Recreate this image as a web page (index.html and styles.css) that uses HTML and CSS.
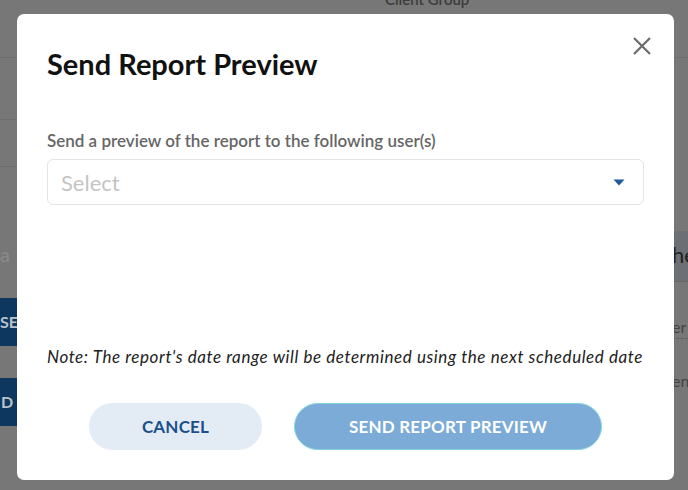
FILE: index.html
```html
<!DOCTYPE html>
<html lang="en">
<head>
  <meta charset="UTF-8" />
  <title>Send Report Preview</title>
  <link rel="stylesheet" href="styles.css">
</head>
<body>
  <!-- page behind the dialog, dimmed -->
  <div class="backdrop">
    <div class="side side-left">
      <div class="row-line gap-58"></div>
      <div class="row-line gap-61"></div>
      <div class="row-line gap-46"></div>
      <div class="stub-text">a</div>
      <div class="dark-btn">SE</div>
      <div class="dark-btn second">D</div>
    </div>
    <div class="middle">
      <div class="top-label">Client Group</div>
    </div>
    <div class="side side-right">
      <div class="row-line gap-58"></div>
      <div class="band">he</div>
      <div class="stub-right dashed">er</div>
      <div class="stub-right">ent</div>
    </div>
  </div>

  <div class="overlay">
    <div class="modal">
      <button class="close-btn" aria-label="Close">
        <svg width="20" height="20" viewBox="0 0 20 20">
          <path d="M2 2 L18 18 M18 2 L2 18" stroke="#6b6b6b" stroke-width="2.2" fill="none" />
        </svg>
      </button>
      <h2 class="modal-title">Send Report Preview</h2>
      <label class="field-label">Send a preview of the report to the following user(s)</label>
      <div class="select-box">
        <span class="placeholder">Select</span>
        <svg class="caret" width="12" height="7" viewBox="0 0 12 7">
          <path d="M0.5 0.5 L11.5 0.5 L6 6.5 Z" fill="#1d5b9b" />
        </svg>
      </div>
      <p class="note">Note: The report's date range will be determined using the next scheduled date</p>
      <div class="actions">
        <button class="btn btn-cancel">CANCEL</button>
        <button class="btn btn-send">SEND REPORT PREVIEW</button>
      </div>
    </div>
  </div>
</body>
</html>
```

FILE: styles.css
```css
* {
  box-sizing: border-box;
  margin: 0;
  padding: 0;
}

body {
  width: 688px;
  height: 490px;
  overflow: hidden;
  background-color: #777777;
  font-family: 'Lato', 'Noto Sans', sans-serif;
  position: relative;
}

/* Background page */
.backdrop {
  display: flex;
  height: 100%;
}

.side {
  display: flex;
  flex-direction: column;
}

.side-left {
  width: 17px;
}

.side-right {
  width: 14px;
  margin-left: auto;
}

.middle {
  flex: 1;
}

.row-line {
  border-bottom: 1px solid #6e6e6e;
}

.gap-58 { height: 58px; }
.gap-61 { height: 62px; }
.gap-46 { height: 47px; }

.stub-text {
  margin-top: 76px;
  font-size: 20px;
  color: #8a8a8a;
  line-height: 22px;
}

.dark-btn {
  margin-top: 33px;
  height: 48px;
  background-color: #0e3760;
  color: #b9c2cc;
  font-weight: 700;
  font-size: 16px;
  line-height: 48px;
  white-space: nowrap;
  overflow: hidden;
}

.dark-btn.second {
  margin-top: 32px;
  padding-left: 1px;
}

.top-label {
  margin-left: 368px;
  margin-top: -10px;
  font-size: 15px;
  color: #3c3c3c;
  font-weight: 600;
}

.band {
  margin-top: 173px;
  height: 51px;
  background-color: #6c6f73;
  border-bottom: 1px solid #686868;
  color: #222;
  font-size: 22px;
  line-height: 48px;
  margin-left: -2px;
  white-space: nowrap;
}

.stub-right {
  font-size: 16px;
  color: #444;
  white-space: nowrap;
  line-height: 18px;
  margin-left: -2px;
}

.stub-right.dashed {
  margin-top: 36px;
  border-bottom: 1px dashed #5e5e5e;
  padding-bottom: 2px;
}

.stub-right:last-child {
  margin-top: 33px;
}

/* Dialog */
.overlay {
  position: absolute;
  inset: 0;
}

.modal {
  position: absolute;
  left: 17px;
  top: 14px;
  width: 657px;
  height: 466px;
  background-color: #fff;
  border-radius: 7px;
  padding: 33px 30px 0 30px;
  display: flex;
  flex-direction: column;
}

.close-btn {
  position: absolute;
  top: 22px;
  right: 22px;
  width: 20px;
  height: 20px;
  background: none;
  border: none;
  cursor: pointer;
}

.close-btn svg {
  display: block;
}

.modal-title {
  font-size: 29px;
  font-weight: 700;
  color: #111;
  line-height: 34px;
}

.field-label {
  margin-top: 50px;
  font-size: 17px;
  font-weight: 600;
  color: #666;
  line-height: 20px;
}

.select-box {
  margin-top: 8px;
  height: 46px;
  border: 1px solid #e4e4e4;
  border-radius: 6px;
  display: flex;
  align-items: center;
  padding: 0 18px 0 13px;
}

.placeholder {
  flex: 1;
  font-size: 22px;
  color: #c4c4c4;
}

.caret {
  display: block;
}

.note {
  margin-top: 142px;
  font-size: 17px;
  font-style: italic;
  letter-spacing: 0.58px;
  white-space: nowrap;
  color: #222;
  line-height: 20px;
}

.actions {
  margin-top: 36px;
  display: flex;
  justify-content: center;
  gap: 32px;
}

.btn {
  height: 47px;
  border-radius: 24px;
  font-family: 'Lato', 'Noto Sans', sans-serif;
  font-size: 17px;
  font-weight: 700;
  letter-spacing: 0.2px;
  cursor: pointer;
}

.btn-cancel {
  width: 173px;
  background-color: #e3ecf5;
  color: #1a4f8b;
  border: none;
}

.btn-send {
  width: 308px;
  background-color: #7babd6;
  color: #fff;
  border: 1px solid #7fd5df;
}
```
